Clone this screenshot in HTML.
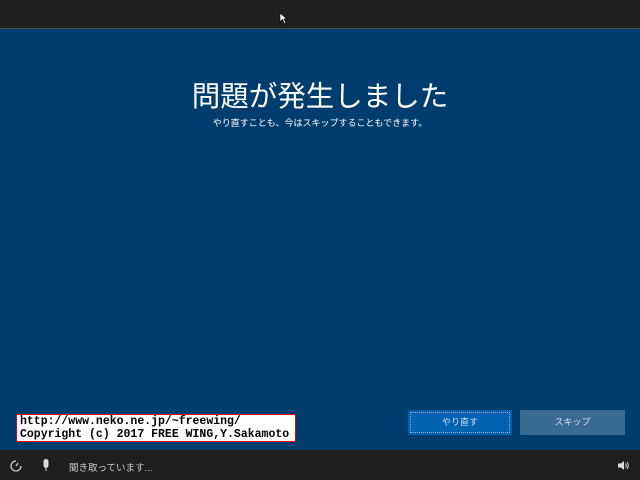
<!DOCTYPE html>
<html><head><meta charset="utf-8"><style>
*{margin:0;padding:0;box-sizing:border-box}
body{width:640px;height:480px;overflow:hidden;background:#003d6f;font-family:"Liberation Sans","Noto Sans CJK JP",sans-serif;position:relative}
.top{position:absolute;left:0;top:0;width:640px;height:29px;background:#1f1f1f;border-bottom:1px solid #4a4a4a}
.bot{position:absolute;left:0;top:450px;width:640px;height:30px;background:#1f1f1f}
.t{position:absolute;left:0;width:640px;text-align:center;color:#fff}
.b{position:absolute;top:410px;height:25px;width:104px;color:#dde;font-size:9px;text-align:center;line-height:25px}
.cr{position:absolute;left:16px;top:414px;width:280px;height:28px;background:#fff;border:1px solid #e00;font-family:"Liberation Mono",monospace;font-size:11.5px;font-weight:bold;line-height:13px;color:#000;padding-left:3px;white-space:nowrap;overflow:hidden}
</style></head><body>
<div class="top"></div>
<svg style="position:absolute;left:279px;top:12px" width="9" height="13"><path d="M1 1 L1 10 L3.5 7.5 L5.5 12 L7 11 L5 7 L8 7 Z" fill="#fff" stroke="#000" stroke-width="0.7"/></svg>
<div class="t" style="top:74px;font-size:28.5px">問題が発生しました</div>
<div class="t" style="top:116px;font-size:9px">やり直すことも、今はスキップすることもできます。</div>
<div class="b" style="left:408px;background:#0063b1;outline:1px dotted #aac;outline-offset:-3px">やり直す</div>
<div class="b" style="left:520px;width:105px;background:#3a6b92">スキップ</div>
<div class="cr">http://www.neko.ne.jp/~freewing/<br>Copyright (c) 2017 FREE WING,Y.Sakamoto</div>
<div class="bot"></div>
<svg style="position:absolute;left:9px;top:459px" width="14" height="14"><path d="M7 2 A5 5 0 1 0 12 7" fill="none" stroke="#ccc" stroke-width="1.3"/><path d="M7 7 L9 4" stroke="#ccc" stroke-width="1.3"/></svg>
<svg style="position:absolute;left:42px;top:459px" width="8" height="13"><rect x="1.5" y="0" width="5" height="9" rx="2.5" fill="#ddd"/><rect x="3.5" y="9" width="1" height="3" fill="#ddd"/></svg>
<div style="position:absolute;left:69px;top:460px;color:#ccc;font-size:9.5px">聞き取っています...</div>
<svg style="position:absolute;left:617px;top:460px" width="12" height="11"><path d="M1 3.5 H4 L7 1 V10 L4 7.5 H1 Z" fill="#ddd"/><path d="M8.5 3.5 Q10 5.5 8.5 7.5 M10 2 Q12.5 5.5 10 9" fill="none" stroke="#ddd"/></svg>
</body></html>
